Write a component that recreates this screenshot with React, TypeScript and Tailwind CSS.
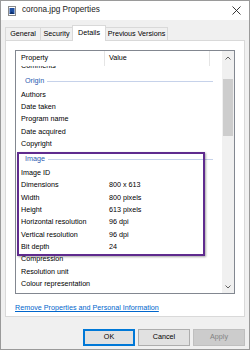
import React from "react";

const Row = ({ p, v }: { p: string; v?: string }) => (
  <div className="h-[12.35px] flex items-center pl-[5px] whitespace-nowrap">
    <span className="w-[88px] shrink-0">{p}</span>
    {v && <span>{v}</span>}
  </div>
);

const Group = ({ t }: { t: string }) => (
  <div className="h-[16.5px] flex items-center pt-[2px] pl-[9px] pr-[9px] text-[#2a5ab0]">
    <span className="whitespace-nowrap">{t}</span>
    <div className="flex-1 ml-[3px] h-px bg-[#c6d2ea]" />
  </div>
);

export default function App() {
  return (
    <div className="w-[250px] h-[350px] border border-[#9a9a9a] bg-[#f0f0f0] flex flex-col font-['Liberation_Sans',Arial,sans-serif] text-[7.2px] text-black overflow-hidden">
      {/* title bar */}
      <div className="h-[19px] bg-white flex items-center pl-[7px] pr-[6px] shrink-0">
        <svg width="8" height="10" viewBox="0 0 8 10" className="shrink-0">
          <rect x="0.5" y="0.5" width="7" height="9" fill="#fff" stroke="#8a8a8a" />
          <rect x="1.5" y="2" width="5" height="6" fill="#1f4fa0" />
          <path d="M1.5 8 L3.5 5.5 L6.5 8 Z" fill="#0b2e6b" />
        </svg>
        <span className="ml-[6px] text-[8.2px] text-[#1a1a1a]">corona.jpg Properties</span>
        <div className="flex-1" />
        <svg width="9" height="9" viewBox="0 0 9 9" className="mr-[2px]">
          <path d="M0.5 0.5 L8.5 8.5 M8.5 0.5 L0.5 8.5" stroke="#222" strokeWidth="0.9" />
        </svg>
      </div>
      {/* tabs */}
      <div className="h-[20px] flex items-end pl-[4px] shrink-0">
        <div className="h-[13px] w-[36px] border border-b-0 border-[#d9d9d9] bg-[#f0f0f0] flex items-center justify-center">General</div>
        <div className="h-[13px] w-[33px] -ml-px border border-b-0 border-[#d9d9d9] bg-[#f0f0f0] flex items-center justify-center">Security</div>
        <div className="h-[16px] w-[34px] -ml-px -mb-px relative z-10 border border-b-0 border-[#d9d9d9] bg-white flex items-center justify-center pb-[1px]">Details</div>
        <div className="h-[13px] w-[63px] -ml-px border border-b-0 border-[#d9d9d9] bg-[#f0f0f0] flex items-center justify-center">Previous Versions</div>
      </div>
      {/* panel */}
      <div className="mx-[4px] h-[277px] shrink-0 bg-white border border-[#d9d9d9] pl-[9px] pt-[9px] flex flex-col">
        <div className="relative w-[220px] h-[244px] border border-[#828790] flex">
          <div className="w-[206px] flex flex-col">
            <div className="h-[15px] flex items-center shrink-0 relative">
              <span className="pl-[5px] w-[93px]">Property</span>
              <span>Value</span>
              <div className="absolute left-[88px] top-0 h-[15px] w-px bg-[#e5e5e5]" />
              <div className="absolute left-[193px] top-0 h-[15px] w-px bg-[#e5e5e5]" />
            </div>
            <div className="flex-1 overflow-hidden">
              <div className="-mt-[6px]">
                <Row p="Comments" />
                <Group t="Origin" />
                <Row p="Authors" />
                <Row p="Date taken" />
                <Row p="Program name" />
                <Row p="Date acquired" />
                <Row p="Copyright" />
                <Group t="Image" />
                <Row p="Image ID" />
                <Row p="Dimensions" v="800 x 613" />
                <Row p="Width" v="800 pixels" />
                <Row p="Height" v="613 pixels" />
                <Row p="Horizontal resolution" v="96 dpi" />
                <Row p="Vertical resolution" v="96 dpi" />
                <Row p="Bit depth" v="24" />
                <Row p="Compression" />
                <Row p="Resolution unit" />
                <Row p="Colour representation" />
              </div>
            </div>
          </div>
          {/* scrollbar */}
          <div className="w-[12px] bg-[#f0f0f0] flex flex-col items-center">
            <div className="h-[13px] flex items-center justify-center">
              <svg width="6" height="4" viewBox="0 0 6 4">
                <path d="M0.5 3.5 L3 1 L5.5 3.5" fill="none" stroke="#606060" strokeWidth="1" />
              </svg>
            </div>
            <div className="mt-[15px] w-[10px] h-[57px] bg-[#cdcdcd]" />
            <div className="flex-1" />
            <div className="h-[13px] flex items-center justify-center">
              <svg width="6" height="4" viewBox="0 0 6 4">
                <path d="M0.5 0.5 L3 3 L5.5 0.5" fill="none" stroke="#606060" strokeWidth="1" />
              </svg>
            </div>
          </div>
          {/* highlight annotation */}
          <div className="absolute left-[1px] top-[101px] w-[188px] h-[104px] border-2 border-[#5f2b8e] shadow-[1px_1px_2px_rgba(0,0,0,0.35)]" />
        </div>
        <div className="mt-[9px] text-[#0066cc] underline leading-[9px]">Remove Properties and Personal Information</div>
      </div>
      {/* buttons */}
      <div className="mt-[12px] h-[17px] flex justify-end gap-[3px] pr-[4px] shrink-0">
        <div className="w-[52px] h-[17px] border-2 border-[#0078d7] bg-[#e1e1e1] flex items-center justify-center">OK</div>
        <div className="w-[52px] h-[17px] border border-[#adadad] bg-[#e1e1e1] flex items-center justify-center">Cancel</div>
        <div className="w-[52px] h-[17px] border border-[#bfbfbf] bg-[#cccccc] text-[#838383] flex items-center justify-center">Apply</div>
      </div>
    </div>
  );
}
